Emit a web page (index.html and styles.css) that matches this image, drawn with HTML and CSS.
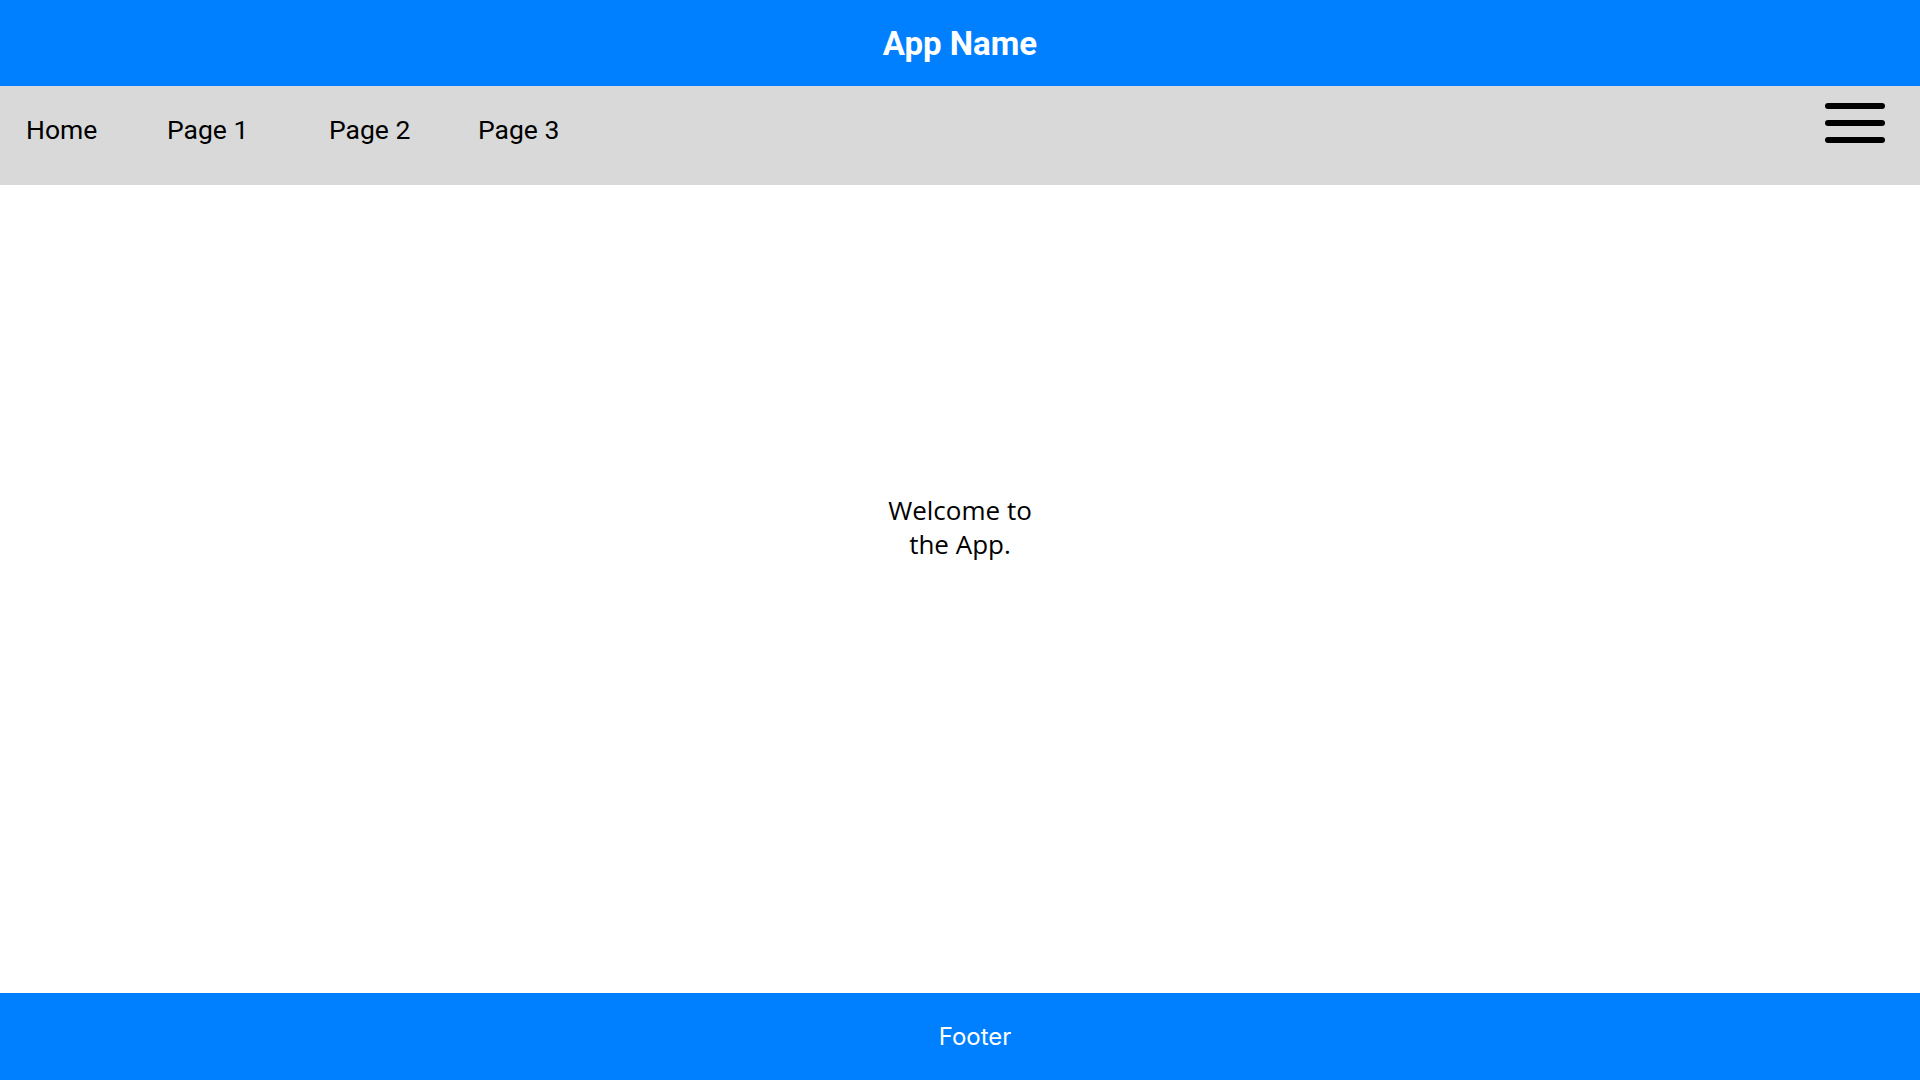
FILE: index.html
```html
<!DOCTYPE html>
<html lang="en">
<head>
<meta charset="utf-8">
<title>App Name</title>
<link rel="stylesheet" href="styles.css">
</head>
<body>
<div class="app">
  <header class="topbar">
    <h1 class="app-title">App Name</h1>
  </header>
  <nav class="navbar">
    <ul class="nav-links">
      <li class="nav-item nav-home">Home</li>
      <li class="nav-item nav-p1">Page 1</li>
      <li class="nav-item nav-p2">Page 2</li>
      <li class="nav-item nav-p3">Page 3</li>
    </ul>
    <button class="menu-btn" aria-label="Menu">
      <svg width="62" height="44" viewBox="0 0 62 44">
        <line x1="4" y1="5" x2="58" y2="5" stroke="#000" stroke-width="6" stroke-linecap="round"/>
        <line x1="4" y1="22" x2="58" y2="22" stroke="#000" stroke-width="6" stroke-linecap="round"/>
        <line x1="4" y1="39" x2="58" y2="39" stroke="#000" stroke-width="6" stroke-linecap="round"/>
      </svg>
    </button>
  </nav>
  <main class="content">
    <p class="welcome">Welcome to<br>the App.</p>
  </main>
  <footer class="footer">
    <span class="footer-text">Footer</span>
  </footer>
</div>
</body>
</html>
```
FILE: styles.css
```css
* { box-sizing: border-box; }
html, body { margin: 0; padding: 0; }
body { background: #fff; }
.app {
  display: flex;
  flex-direction: column;
  height: 100vh;
}
.topbar {
  height: 86px;
  background: #0080ff;
  display: flex;
  align-items: center;
  justify-content: center;
}
.app-title {
  margin: 0;
  color: #fff;
  font-family: Roboto, "Liberation Sans", sans-serif;
  font-weight: 700;
  font-size: 33px;
}
.navbar {
  height: 99px;
  background: #d9d9d9;
  display: flex;
  align-items: center;
  justify-content: space-between;
  padding: 0 34px 0 26px;
}
.nav-links {
  list-style: none;
  margin: 0 0 12px;
  padding: 0;
  display: flex;
}
.nav-item {
  font-family: Roboto, "Liberation Sans", sans-serif;
  font-size: 26.5px;
  color: #000;
}
.nav-home { width: 141px; }
.nav-p1 { width: 162px; }
.nav-p2 { width: 149px; }
.menu-btn {
  background: none;
  border: 0;
  padding: 0;
  margin-bottom: 26px;
  display: flex;
}
.content {
  flex: 1;
  display: flex;
  justify-content: center;
  padding-top: 308px;
}
.welcome {
  margin: 0;
  text-align: center;
  font-family: "Open Sans", sans-serif;
  font-size: 26px;
  line-height: 34px;
  color: #000;
}
.footer {
  height: 87px;
  background: #0080ff;
  display: flex;
  align-items: center;
  justify-content: center;
  padding-left: 30px;
}
.footer-text {
  font-family: Inter, sans-serif;
  font-size: 24px;
  color: #fff;
}
```
